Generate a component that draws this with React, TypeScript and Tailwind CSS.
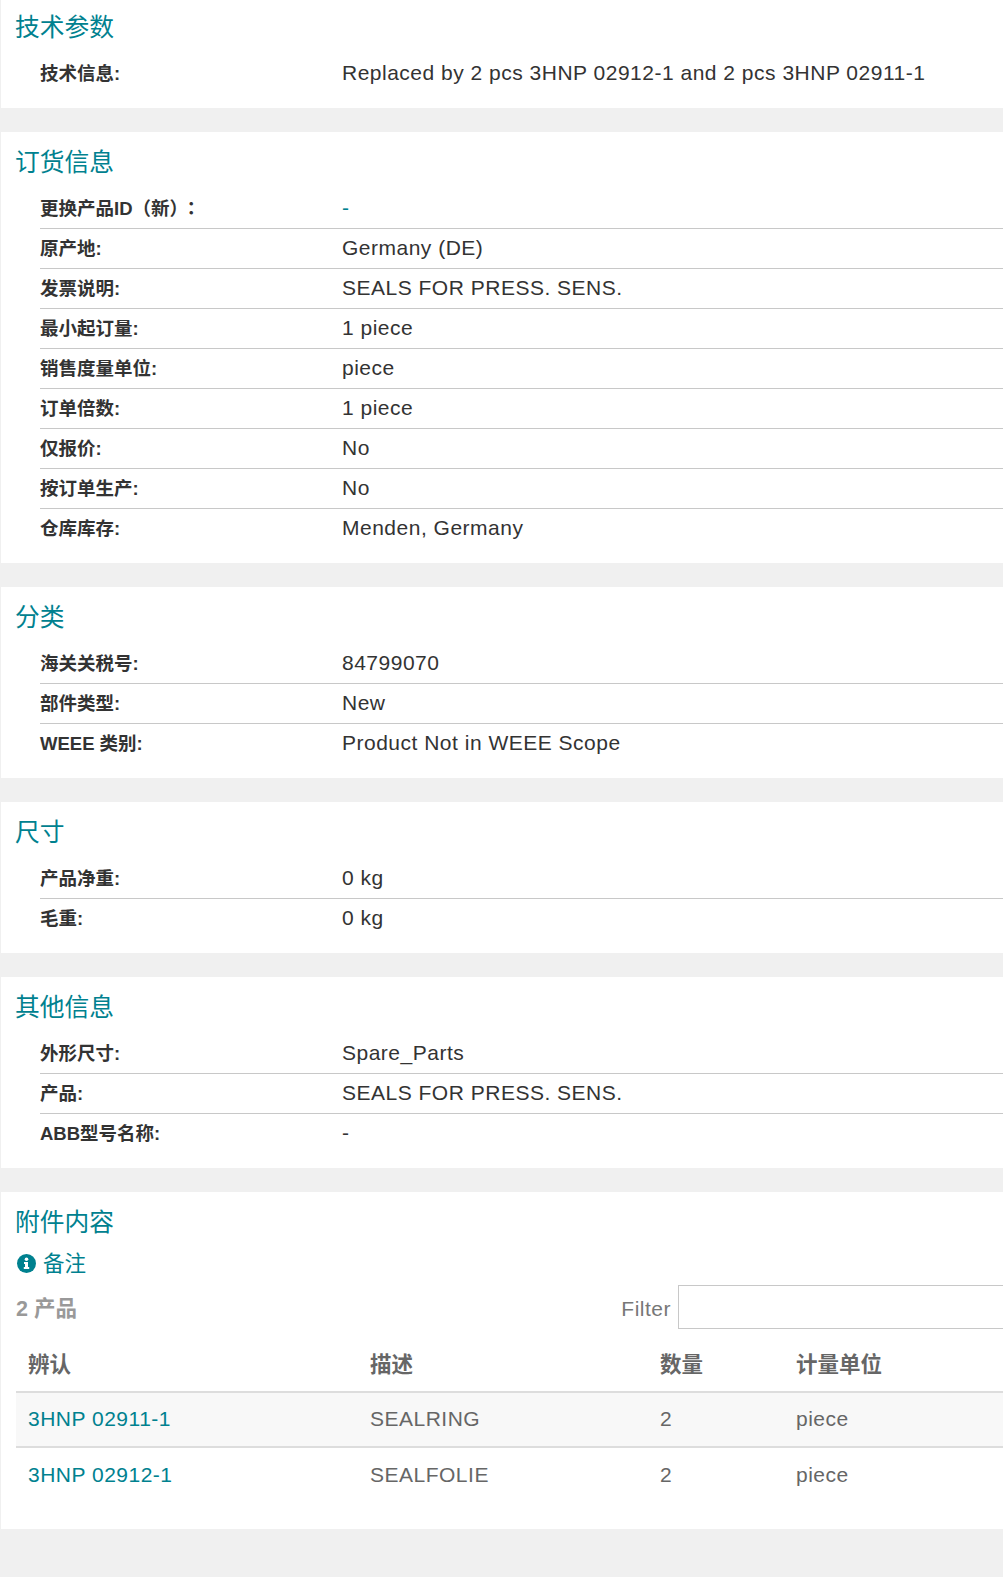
import React from 'react';

const FONT = '"Liberation Sans", "Noto Sans CJK SC", sans-serif';

type Row = { label: React.ReactNode; value: string; link?: boolean };

const Section: React.FC<{ title: string; first?: boolean; children: React.ReactNode }> = ({ title, first, children }) => (
  <section className={`bg-white ml-px ${first ? 'pt-[8px]' : 'pt-[11px]'}`}>
    <h2 className="pl-[14px] h-[40px] leading-[40px] text-[24.75px] font-normal text-[#00818f]">{title}</h2>
    {children}
  </section>
);

const Rows: React.FC<{ rows: Row[] }> = ({ rows }) => (
  <dl className="pl-[39px] pt-[6px] pb-[14px]">
    {rows.map((row, i) => (
      <div key={i} className={`flex items-center h-[40px] ${i < rows.length - 1 ? 'border-b border-[#c8c8c8]' : ''}`}>
        <dt className="w-[302px] shrink-0 text-[18.5px] font-bold text-[#333333] [text-spacing-trim:space-all]">
          {row.label}
        </dt>
        <dd className={`pb-[2px] text-[21px] tracking-[0.5px] ${row.link ? 'text-[#00818f]' : 'text-[#333333]'}`}>{row.value}</dd>
      </div>
    ))}
  </dl>
);

const Gap = () => <div className="h-[24px]" />;

const InfoIcon = () => (
  <svg width="19" height="19" viewBox="0 0 19 19" className="shrink-0">
    <circle cx="9.5" cy="9.5" r="9.5" fill="#00818f" />
    <circle cx="9.5" cy="5.2" r="1.8" fill="#ffffff" />
    <path d="M7 8h4v5h1.2v2H6.8v-2H8v-3H7z" fill="#ffffff" />
  </svg>
);

const products = [
  { id: '3HNP 02911-1', desc: 'SEALRING', qty: '2', unit: 'piece' },
  { id: '3HNP 02912-1', desc: 'SEALFOLIE', qty: '2', unit: 'piece' },
];

const COLS = 'grid grid-cols-[342px_290px_136px_1fr]';

export default function App() {
  return (
    <div className="w-[1003px] h-[1580px] bg-white overflow-hidden" style={{ fontFamily: FONT }}>
      <div className="bg-[#f0f0f0] h-[1577px]">
        <Section title="技术参数" first>
          <Rows rows={[{ label: '技术信息:', value: 'Replaced by 2 pcs 3HNP 02912-1 and 2 pcs 3HNP 02911-1' }]} />
        </Section>
        <Gap />
        <Section title="订货信息">
          <Rows
            rows={[
              {
                label: (
                  <>
                    更换产品ID（新<span className="tracking-[-6px]">）</span>
                    <span className="font-['Noto_Sans_CJK_TC']">：</span>
                  </>
                ),
                value: '-',
                link: true,
              },
              { label: '原产地:', value: 'Germany (DE)' },
              { label: '发票说明:', value: 'SEALS FOR PRESS. SENS.' },
              { label: '最小起订量:', value: '1 piece' },
              { label: '销售度量单位:', value: 'piece' },
              { label: '订单倍数:', value: '1 piece' },
              { label: '仅报价:', value: 'No' },
              { label: '按订单生产:', value: 'No' },
              { label: '仓库库存:', value: 'Menden, Germany' },
            ]}
          />
        </Section>
        <Gap />
        <Section title="分类">
          <Rows
            rows={[
              { label: '海关关税号:', value: '84799070' },
              { label: '部件类型:', value: 'New' },
              { label: 'WEEE 类别:', value: 'Product Not in WEEE Scope' },
            ]}
          />
        </Section>
        <Gap />
        <Section title="尺寸">
          <Rows
            rows={[
              { label: '产品净重:', value: '0 kg' },
              { label: '毛重:', value: '0 kg' },
            ]}
          />
        </Section>
        <Gap />
        <Section title="其他信息">
          <Rows
            rows={[
              { label: '外形尺寸:', value: 'Spare_Parts' },
              { label: '产品:', value: 'SEALS FOR PRESS. SENS.' },
              { label: 'ABB型号名称:', value: '-' },
            ]}
          />
        </Section>
        <Gap />
        <Section title="附件内容">
          <div className="pl-[16px] h-[41px] flex items-center gap-[7px] text-[21.5px] text-[#00818f]">
            <InfoIcon />
            <span className="pt-[1px]">备注</span>
          </div>
          <div className="pl-[15px] flex items-center justify-between h-[44px] mt-[1px] text-[21.5px]">
            <span className="pt-[5px] font-bold text-[#999999]">2 产品</span>
            <label className="flex items-center gap-[7px] text-[21px] tracking-[0.5px] text-[#777777]">
              <span className="pt-[3px]">Filter</span>
              <input className="w-[325px] h-[44px] border border-[#c8c8c8] border-r-0 bg-white" />
            </label>
          </div>
          <div className="ml-[15px] mt-[15px] text-[21px] tracking-[0.5px] text-[#666666] pb-[26px]">
            <div className={`${COLS} h-[49px] pb-[4px] items-center text-[21.5px] tracking-normal font-bold border-b-2 border-[#dddddd]`}>
              <div className="pl-[12px]">辨认</div>
              <div className="pl-[12px]">描述</div>
              <div className="pl-[12px]">数量</div>
              <div className="pl-[12px]">计量单位</div>
            </div>
            {products.map((p, i) => (
              <div
                key={p.id}
                className={`${COLS} h-[55px] pb-[1px] items-center ${i === 0 ? 'bg-[#f8f8f8] border-b-2 border-[#dddddd]' : ''}`}
              >
                <div className="pl-[12px] text-[#00818f]">{p.id}</div>
                <div className="pl-[12px]">{p.desc}</div>
                <div className="pl-[12px]">{p.qty}</div>
                <div className="pl-[12px]">{p.unit}</div>
              </div>
            ))}
          </div>
        </Section>
      </div>
    </div>
  );
}
